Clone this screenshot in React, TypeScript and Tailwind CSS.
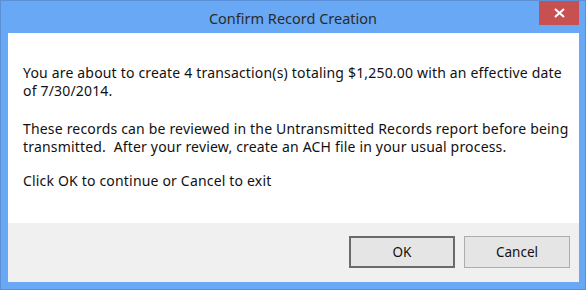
export default function App() {
  return (
    <div className="w-[586px] h-[290px] bg-[#69a8f4] border border-[#5b90d6] flex flex-col" style={{ fontFamily: '"Noto Sans", "Open Sans", sans-serif' }}>
      {/* title bar */}
      <div className="relative h-[32px] shrink-0 flex items-center justify-center">
        <span className="text-[14.5px] text-[#2b2b2b] mt-[4px]">Confirm Record Creation</span>
        <div className="absolute top-0 right-[6px] w-[40px] h-[24px] bg-[#c75050] flex items-center justify-center">
          <svg width="11" height="10" viewBox="0 0 11 10">
            <path d="M1 1 L10 9 M10 1 L1 9" stroke="white" strokeWidth="2" />
          </svg>
        </div>
      </div>

      {/* client area */}
      <div className="flex-1 ml-[7px] mr-[6px] mb-[7px] flex flex-col">
        <div className="h-[190px] bg-white pl-[15px] pt-[31px] text-[14px] tracking-[0.18px] leading-[18px] text-[#111]">
          <div className="w-[548px]">
            <p>You are about to create 4 transaction(s) totaling $1,250.00 with an effective date of 7/30/2014.</p>
            <p className="mt-[20px]">These records can be reviewed in the Untransmitted Records report before being transmitted.&nbsp; After your review, create an ACH file in your usual process.</p>
            <p className="mt-[16px]">Click OK to continue or Cancel to exit</p>
          </div>
        </div>
        <div className="flex-1 bg-[#f0f0f0] flex justify-end items-start gap-[9px] pt-[13px] pr-[9px]">
          <button className="w-[106px] h-[32px] bg-[#e5e5e5] border-2 border-[#6b6b6b] text-[13.5px] text-[#111]">OK</button>
          <button className="w-[106px] h-[32px] bg-[#e5e5e5] border border-[#adadad] text-[13.5px] text-[#111]">Cancel</button>
        </div>
      </div>
    </div>
  );
}
